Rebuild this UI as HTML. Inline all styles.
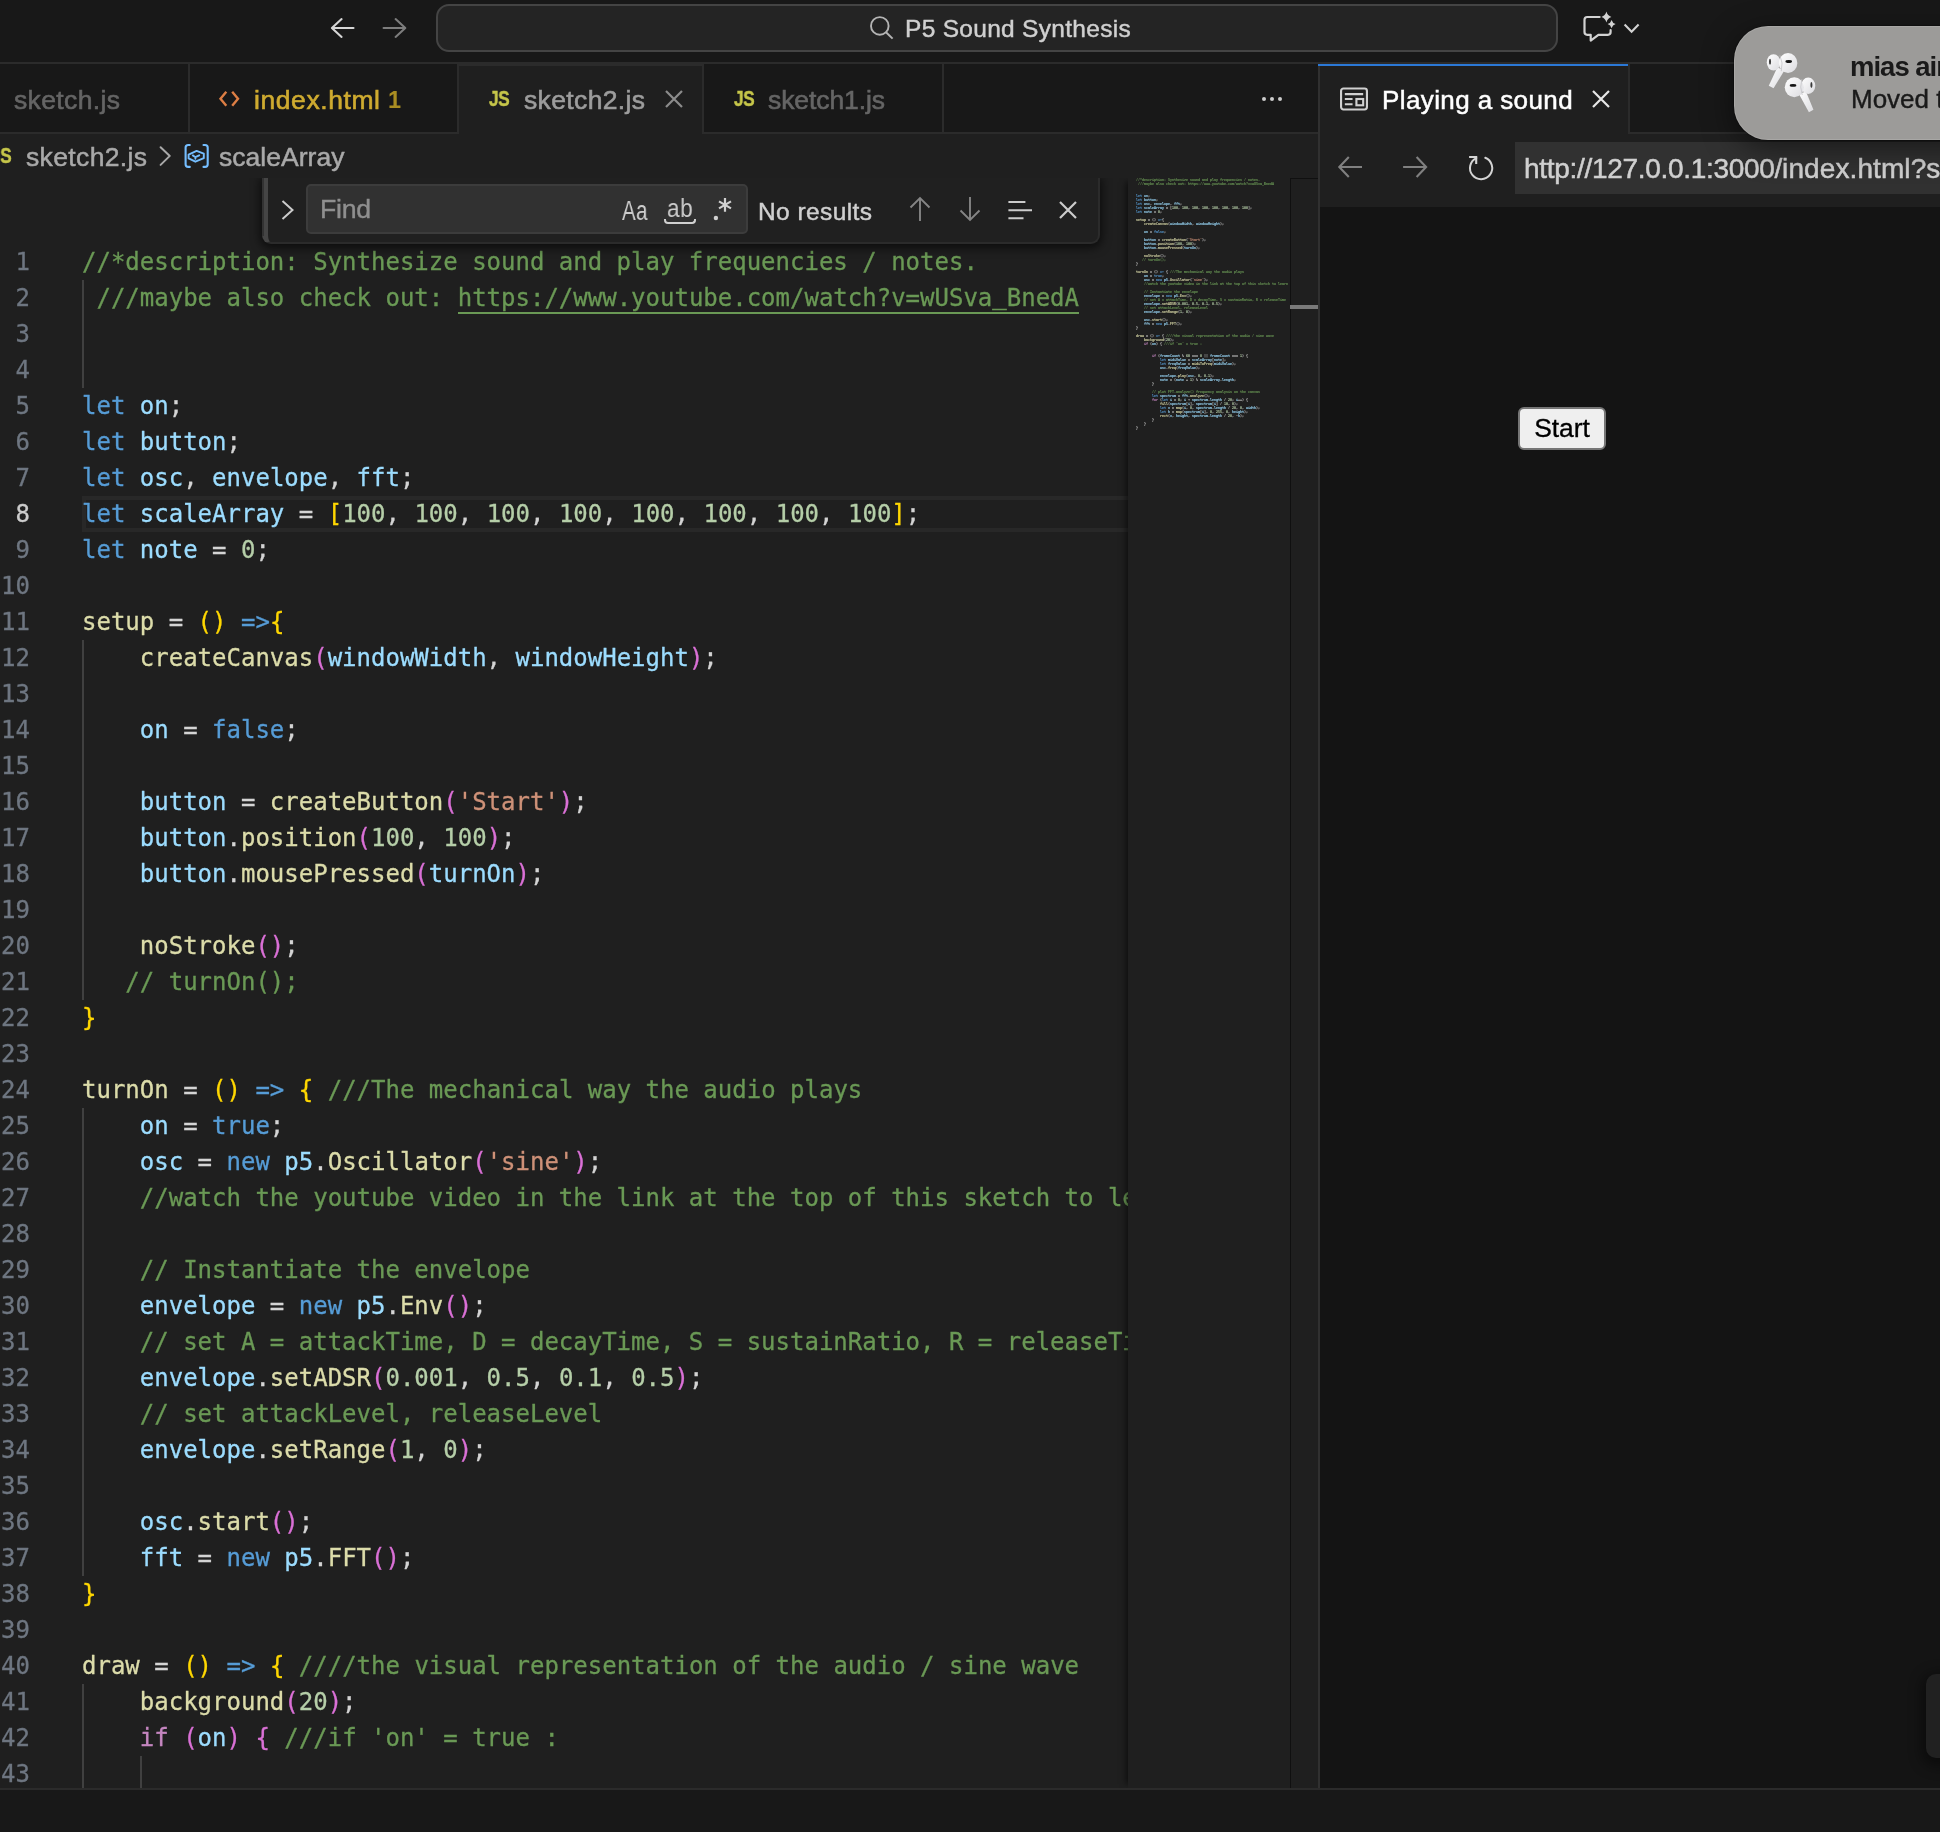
<!DOCTYPE html>
<html lang="en">
<head>
<meta charset="utf-8">
<title>P5 Sound Synthesis</title>
<style>
*{box-sizing:border-box;margin:0;padding:0}
html,body{width:1940px;height:1832px;overflow:hidden;background:#181818}
body{position:relative;font-family:"Liberation Sans",sans-serif;color:#ccc;-webkit-font-smoothing:antialiased}
.abs{position:absolute}
.tl,.bl,.ft,.nt,.js,#code,#cctext,#urlt,#start,#mmcode{will-change:transform}
/* ---------- title bar ---------- */
#title{left:0;top:0;width:1940px;height:64px;background:#181818;border-bottom:2px solid #2b2b2b}
#cc{left:436px;top:4px;width:1122px;height:48px;border:2px solid #444;border-radius:13px;background:#242424}
#cctext{left:905px;top:12px;font-size:24.5px;line-height:34px;color:#d0d0d0;white-space:nowrap;letter-spacing:.3px;-webkit-text-stroke:.45px}
/* ---------- tabs ---------- */
#tabs{left:0;top:64px;width:1318px;height:70px;background:#181818;border-bottom:2px solid #2b2b2b}
.tab{position:absolute;top:0;height:70px;border-right:2px solid #2b2b2b;border-bottom:2px solid #2b2b2b;background:#181818}
.tab.on{background:#1f1f1f;border-bottom:none;border-top:2px solid #2b2b2b}
.tl{position:absolute;top:19px;font-size:26.5px;line-height:34px;white-space:nowrap;letter-spacing:.36px;-webkit-text-stroke:.6px}
.js{position:absolute;font-size:21.5px;font-weight:bold;color:#c6c64a;line-height:30px;letter-spacing:-.5px;transform:scaleX(.8);transform-origin:0 0;white-space:nowrap;-webkit-text-stroke:.45px}
/* ---------- breadcrumbs ---------- */
#bc{left:0;top:134px;width:1318px;height:44px;background:#1f1f1f}
.bl{position:absolute;top:6px;font-size:26.5px;line-height:34px;color:#a9a9a9;white-space:nowrap;letter-spacing:.36px;-webkit-text-stroke:.5px}
/* ---------- editor ---------- */
#ed{left:0;top:178px;width:1318px;height:1610px;background:#1f1f1f;overflow:hidden}
#code{position:absolute;left:0;top:66px;width:1128px;font-family:"DejaVu Sans Mono","Liberation Mono",monospace;font-size:24px;line-height:36px;color:#d4d4d4;overflow:hidden;-webkit-text-stroke:.3px}
.row{position:relative;height:36px;width:1128px;overflow:hidden}
.ln{position:absolute;left:-14px;top:0;width:44px;text-align:right;color:#6e7681}
.ln.act{color:#ccc}
.tx{position:absolute;left:82px;top:0;white-space:pre}
.c{color:#6a9955}.k{color:#569cd6}.v{color:#9cdcfe}.f{color:#dcdcaa}.n{color:#b5cea8}.s{color:#ce9178}.x{color:#c586c0}
.b1{color:#ffd700}.b2{color:#da70d6}.b3{color:#179fff}
.u{color:#6a9955}
.ul{position:absolute;top:32px;height:2px;background:#6a9955}
.us{position:relative;top:-2.500px}
.guide{position:absolute;width:2px;background:#404040}
#curline{left:82px;top:318px;width:1050px;height:36px;border:4px solid #282828}
/* minimap */
#mm{left:1128px;top:0;width:162px;height:1610px;background:#1f1f1f;box-shadow:-6px 0 6px -4px rgba(0,0,0,.55)}
#mmcode{position:absolute;left:8px;top:0;transform-origin:0 0;transform:scale(.1384,.1111);font-family:"DejaVu Sans Mono","Liberation Mono",monospace;font-size:24px;line-height:36px;color:#d4d4d4;font-weight:bold}
#mmcode div{height:36px;white-space:pre}
#mmcode .b1,#mmcode .b2,#mmcode .b3{color:#d4d4d4}
#mmcode .us{position:static}
#sb{left:1290px;top:0;width:28px;height:1610px;background:#1f1f1f;border-left:1px solid #101010;border-top:1px solid #101010}
#sbs{left:1290px;top:127px;width:28px;height:4px;background:#7a7a7a}
/* find */
#find{left:262px;top:0;width:838px;height:66px;background:#202020;border:2px solid #2b2b2b;border-top:none;border-left:6px solid #454545;border-radius:0 0 9px 9px;box-shadow:0 2px 10px 2px rgba(0,0,0,.6)}
#finp{left:306px;top:6px;width:442px;height:50px;background:#313131;border:2px solid #3c3c3c;border-radius:5px}
.ft{position:absolute;font-size:26px;line-height:34px;white-space:nowrap}
/* ---------- right panel ---------- */
#rp{left:1318px;top:64px;width:622px;height:1724px;background:#141414;border-left:2px solid #303030}
#rtabs{left:1320px;top:64px;width:620px;height:70px;background:#181818;border-bottom:2px solid #2b2b2b}
#rtab{left:1320px;top:64px;width:310px;height:70px;background:#1f1f1f;border-right:2px solid #2b2b2b}
#rtabtop{left:1318px;top:64px;width:310px;height:2px;background:#2b78d6}
#nav{left:1320px;top:134px;width:620px;height:73px;background:#1f1f1f}
#url{left:1515px;top:142px;width:430px;height:52px;background:#313131}
#urlt{left:1523.500px;top:151px;font-size:28px;line-height:36px;color:#d0d0d0;white-space:nowrap;letter-spacing:.1px;-webkit-text-stroke:.5px}
#start{left:1518px;top:407px;width:88px;height:43px;background:#efefef;border:2px solid #767676;border-radius:6px;color:#000;font-size:26.4px;line-height:39px;text-align:center;-webkit-text-stroke:.35px}
#mini2{left:1926px;top:1674px;width:30px;height:84px;background:#212121;border-radius:10px;box-shadow:0 4px 14px 4px rgba(0,0,0,.45)}
/* ---------- bottom ---------- */
#bot{left:0;top:1788px;width:1940px;height:44px;background:#181818;border-top:2px solid #2b2b2b}
/* ---------- notification ---------- */
#noti{left:1734px;top:26px;width:260px;height:114px;background:#9c9b99;border-radius:34px;box-shadow:inset 0 0 0 1px rgba(255,255,255,.12),0 0 0 1px rgba(0,0,0,.25),0 8px 30px rgba(0,0,0,.5)}
.nt{position:absolute;left:1850px;font-size:26px;line-height:32px;color:#1a1a1a;white-space:nowrap;letter-spacing:0}
svg{position:absolute;overflow:visible}
</style>
</head>
<body>
<!-- title bar -->
<div id="title" class="abs"></div>
<svg class="abs" style="left:320px;top:8px" width="100" height="40" viewBox="320 8 100 40"><path d="M341.600 19.100 L331.900 28 L341.600 36.900 M332.200 28 H353.500" fill="none" stroke="#d6d6d6" stroke-width="2.100" stroke-linecap="round" stroke-linejoin="round"/><path d="M395.600 19.100 L405.300 28 L395.600 36.900 M405 28 H383.600" fill="none" stroke="#7d7d7d" stroke-width="2.100" stroke-linecap="round" stroke-linejoin="round"/></svg>
<div id="cc" class="abs"></div>
<svg class="abs" style="left:869px;top:15px" width="26" height="26" viewBox="0 0 26 26"><circle cx="10.800" cy="10.900" r="8.800" fill="none" stroke="#b4b4b4" stroke-width="1.900"/><path d="M17 17.200 L23.600 23.600" stroke="#b4b4b4" stroke-width="2" fill="none"/></svg>
<div id="cctext" class="abs">P5 Sound Synthesis</div>
<svg class="abs" style="left:1560px;top:0" width="120" height="60" viewBox="0 0 120 60"><path d="M39.600 17 H27.200 Q24.500 17 24.500 19.700 V32.100 Q24.500 34.800 27.200 34.800 H30.700 V40.600 L38.400 34.800 H47.900 Q50.600 34.800 50.600 32.100 V30.200" fill="none" stroke="#d2d2d2" stroke-width="2.200" stroke-linejoin="round" stroke-linecap="round"/><path d="M46.40 11.60 Q47.50 15.81 51.40 17.00 Q47.50 18.19 46.40 22.40 Q45.30 18.19 41.40 17.00 Q45.30 15.81 46.40 11.60 Z" fill="#d2d2d2"/><path d="M51.60 20.00 Q52.48 23.20 55.60 24.10 Q52.48 25.00 51.60 28.20 Q50.72 25.00 47.60 24.10 Q50.72 23.20 51.60 20.00 Z" fill="#d2d2d2"/><path d="M64.600 24.600 L71.600 31.800 L78.600 24.600" fill="none" stroke="#d2d2d2" stroke-width="2.100"/></svg>

<!-- tabs -->
<div id="tabs" class="abs">
  <div class="tab" style="left:0;width:190px"><span class="tl" style="left:14px;color:#656565">sketch.js</span></div>
  <div class="tab" style="left:190px;width:269px;z-index:1">
    <svg style="left:29px;top:27px" width="21" height="16" viewBox="0 0 21 16"><path d="M7.300 .8 L1.500 7.800 L7.300 14.800 M13.200 .8 L19 7.800 L13.200 14.800" fill="none" stroke="#dd7e44" stroke-width="2.400"/></svg>
    <span class="tl" style="left:64px;color:#cfab30;letter-spacing:.58px">index.html</span><span class="tl" style="left:198px;color:#a98d22;font-size:23.5px;font-weight:bold;-webkit-text-stroke:0">1</span></div>
  <div class="tab on" style="left:458px;width:246px">
    <span class="js" style="left:31px;top:18px">JS</span>
    <span class="tl" style="left:66px;top:17px;color:#9d9d9d">sketch2.js</span>
    <svg style="left:207px;top:24px" width="18" height="18" viewBox="0 0 18 18"><path d="M1 1 L17 17 M17 1 L1 17" fill="none" stroke="#8c8c8c" stroke-width="2.2"/></svg>
  </div>
  <div class="tab" style="left:704px;width:240px">
    <span class="js" style="left:30px;top:20px">JS</span>
    <span class="tl" style="left:64px;color:#656565;letter-spacing:-.08px">sketch1.js</span></div>
  <svg style="left:1261px;top:32px" width="22" height="6" viewBox="0 0 22 6"><circle cx="3" cy="3" r="2" fill="#ccc"/><circle cx="11" cy="3" r="2" fill="#ccc"/><circle cx="19" cy="3" r="2" fill="#ccc"/></svg>
</div>

<!-- breadcrumbs -->
<div id="bc" class="abs">
  <span class="js" style="left:-9px;top:7px">JS</span>
  <span class="bl" style="left:26px">sketch2.js</span>
  <svg style="left:150px;top:2px" width="100" height="40" viewBox="150 136 100 40"><path d="M160.600 147.200 L169.800 155.900 L160.600 164.900" fill="none" stroke="#a9a9a9" stroke-width="2" stroke-linecap="round" stroke-linejoin="round"/><path d="M189.800 145 H188.200 Q185.600 145 185.600 147.600 V164.300 Q185.600 166.900 188.200 166.900 H189.800 M203.500 145 H205.100 Q207.700 145 207.700 147.600 V164.300 Q207.700 166.900 205.100 166.900 H203.500" fill="none" stroke="#75beff" stroke-width="2.100" stroke-linecap="round"/><path d="M196.600 150.900 L203.800 153.700 V158.200 L195.400 161.700 L188.600 158.400 V154.600 Z" fill="none" stroke="#75beff" stroke-width="1.900" stroke-linejoin="round"/><path d="M192.800 155.400 L195.400 157.200 L199.200 155.300 M195.400 157.200 V158.700" fill="none" stroke="#75beff" stroke-width="1.900" stroke-linecap="round"/></svg>
  <span class="bl" style="left:219px;letter-spacing:.03px">scaleArray</span>
</div>

<!-- editor -->
<div id="ed" class="abs">
  <div id="curline" class="abs"></div>
  <div id="code">
<div class="row"><span class="ln">1</span><span class="tx"><span class="c">//*description: Synthesize sound and play frequencies / notes.</span></span></div>
<div class="row"><span class="ln">2</span><span class="tx"><span class="c"> ///maybe also check out: </span><span class="u">https://www.youtube.com/watch?v=wUSva<span class="us">_</span>BnedA</span></span><span class="ul" style="left:457.68px;width:621.32px"></span></div>
<div class="row"><span class="ln">3</span><span class="tx"></span></div>
<div class="row"><span class="ln">4</span><span class="tx"></span></div>
<div class="row"><span class="ln">5</span><span class="tx"><span class="k">let</span> <span class="v">on</span>;</span></div>
<div class="row"><span class="ln">6</span><span class="tx"><span class="k">let</span> <span class="v">button</span>;</span></div>
<div class="row"><span class="ln">7</span><span class="tx"><span class="k">let</span> <span class="v">osc</span>, <span class="v">envelope</span>, <span class="v">fft</span>;</span></div>
<div class="row"><span class="ln act">8</span><span class="tx"><span class="k">let</span> <span class="v">scaleArray</span> = <span class="b1">[</span><span class="n">100</span>, <span class="n">100</span>, <span class="n">100</span>, <span class="n">100</span>, <span class="n">100</span>, <span class="n">100</span>, <span class="n">100</span>, <span class="n">100</span><span class="b1">]</span>;</span></div>
<div class="row"><span class="ln">9</span><span class="tx"><span class="k">let</span> <span class="v">note</span> = <span class="n">0</span>;</span></div>
<div class="row"><span class="ln">10</span><span class="tx"></span></div>
<div class="row"><span class="ln">11</span><span class="tx"><span class="f">setup</span> = <span class="b1">()</span> <span class="k">=&gt;</span><span class="b1">{</span></span></div>
<div class="row"><span class="ln">12</span><span class="tx">    <span class="f">createCanvas</span><span class="b2">(</span><span class="v">windowWidth</span>, <span class="v">windowHeight</span><span class="b2">)</span>;</span></div>
<div class="row"><span class="ln">13</span><span class="tx"></span></div>
<div class="row"><span class="ln">14</span><span class="tx">    <span class="v">on</span> = <span class="k">false</span>;</span></div>
<div class="row"><span class="ln">15</span><span class="tx"></span></div>
<div class="row"><span class="ln">16</span><span class="tx">    <span class="v">button</span> = <span class="f">createButton</span><span class="b2">(</span><span class="s">'Start'</span><span class="b2">)</span>;</span></div>
<div class="row"><span class="ln">17</span><span class="tx">    <span class="v">button</span>.<span class="f">position</span><span class="b2">(</span><span class="n">100</span>, <span class="n">100</span><span class="b2">)</span>;</span></div>
<div class="row"><span class="ln">18</span><span class="tx">    <span class="v">button</span>.<span class="f">mousePressed</span><span class="b2">(</span><span class="v">turnOn</span><span class="b2">)</span>;</span></div>
<div class="row"><span class="ln">19</span><span class="tx"></span></div>
<div class="row"><span class="ln">20</span><span class="tx">    <span class="f">noStroke</span><span class="b2">()</span>;</span></div>
<div class="row"><span class="ln">21</span><span class="tx">   <span class="c">// turnOn();</span></span></div>
<div class="row"><span class="ln">22</span><span class="tx"><span class="b1">}</span></span></div>
<div class="row"><span class="ln">23</span><span class="tx"></span></div>
<div class="row"><span class="ln">24</span><span class="tx"><span class="f">turnOn</span> = <span class="b1">()</span> <span class="k">=&gt;</span> <span class="b1">{</span> <span class="c">///The mechanical way the audio plays</span></span></div>
<div class="row"><span class="ln">25</span><span class="tx">    <span class="v">on</span> = <span class="k">true</span>;</span></div>
<div class="row"><span class="ln">26</span><span class="tx">    <span class="v">osc</span> = <span class="k">new</span> <span class="v">p5</span>.<span class="f">Oscillator</span><span class="b2">(</span><span class="s">'sine'</span><span class="b2">)</span>;</span></div>
<div class="row"><span class="ln">27</span><span class="tx">    <span class="c">//watch the youtube video in the link at the top of this sketch to learn</span></span></div>
<div class="row"><span class="ln">28</span><span class="tx"></span></div>
<div class="row"><span class="ln">29</span><span class="tx">    <span class="c">// Instantiate the envelope</span></span></div>
<div class="row"><span class="ln">30</span><span class="tx">    <span class="v">envelope</span> = <span class="k">new</span> <span class="v">p5</span>.<span class="f">Env</span><span class="b2">()</span>;</span></div>
<div class="row"><span class="ln">31</span><span class="tx">    <span class="c">// set A = attackTime, D = decayTime, S = sustainRatio, R = releaseTime</span></span></div>
<div class="row"><span class="ln">32</span><span class="tx">    <span class="v">envelope</span>.<span class="f">setADSR</span><span class="b2">(</span><span class="n">0.001</span>, <span class="n">0.5</span>, <span class="n">0.1</span>, <span class="n">0.5</span><span class="b2">)</span>;</span></div>
<div class="row"><span class="ln">33</span><span class="tx">    <span class="c">// set attackLevel, releaseLevel</span></span></div>
<div class="row"><span class="ln">34</span><span class="tx">    <span class="v">envelope</span>.<span class="f">setRange</span><span class="b2">(</span><span class="n">1</span>, <span class="n">0</span><span class="b2">)</span>;</span></div>
<div class="row"><span class="ln">35</span><span class="tx"></span></div>
<div class="row"><span class="ln">36</span><span class="tx">    <span class="v">osc</span>.<span class="f">start</span><span class="b2">()</span>;</span></div>
<div class="row"><span class="ln">37</span><span class="tx">    <span class="v">fft</span> = <span class="k">new</span> <span class="v">p5</span>.<span class="f">FFT</span><span class="b2">()</span>;</span></div>
<div class="row"><span class="ln">38</span><span class="tx"><span class="b1">}</span></span></div>
<div class="row"><span class="ln">39</span><span class="tx"></span></div>
<div class="row"><span class="ln">40</span><span class="tx"><span class="f">draw</span> = <span class="b1">()</span> <span class="k">=&gt;</span> <span class="b1">{</span> <span class="c">////the visual representation of the audio / sine wave</span></span></div>
<div class="row"><span class="ln">41</span><span class="tx">    <span class="f">background</span><span class="b2">(</span><span class="n">20</span><span class="b2">)</span>;</span></div>
<div class="row"><span class="ln">42</span><span class="tx">    <span class="x">if</span> <span class="b2">(</span><span class="v">on</span><span class="b2">)</span> <span class="b2">{</span> <span class="c">///if 'on' = true :</span></span></div>
<div class="row"><span class="ln">43</span><span class="tx"></span></div>
  </div>
  <div class="guide" style="left:82px;top:102px;height:108px"></div>
  <div class="guide" style="left:82px;top:462px;height:360px"></div>
  <div class="guide" style="left:82px;top:930px;height:468px"></div>
  <div class="guide" style="left:82px;top:1506px;height:108px"></div>
  <div class="guide" style="left:140px;top:1578px;height:36px"></div>
  <div id="mm" class="abs"><div id="mmcode">
<div><span class="c">//*description: Synthesize sound and play frequencies / notes.</span></div>
<div><span class="c"> ///maybe also check out: </span><span class="u">https://www.youtube.com/watch?v=wUSva_BnedA</span></div>
<div></div>
<div></div>
<div><span class="k">let</span> <span class="v">on</span>;</div>
<div><span class="k">let</span> <span class="v">button</span>;</div>
<div><span class="k">let</span> <span class="v">osc</span>, <span class="v">envelope</span>, <span class="v">fft</span>;</div>
<div><span class="k">let</span> <span class="v">scaleArray</span> = <span class="b1">[</span><span class="n">100</span>, <span class="n">100</span>, <span class="n">100</span>, <span class="n">100</span>, <span class="n">100</span>, <span class="n">100</span>, <span class="n">100</span>, <span class="n">100</span><span class="b1">]</span>;</div>
<div><span class="k">let</span> <span class="v">note</span> = <span class="n">0</span>;</div>
<div></div>
<div><span class="f">setup</span> = <span class="b1">()</span> <span class="k">=&gt;</span><span class="b1">{</span></div>
<div>    <span class="f">createCanvas</span><span class="b2">(</span><span class="v">windowWidth</span>, <span class="v">windowHeight</span><span class="b2">)</span>;</div>
<div></div>
<div>    <span class="v">on</span> = <span class="k">false</span>;</div>
<div></div>
<div>    <span class="v">button</span> = <span class="f">createButton</span><span class="b2">(</span><span class="s">'Start'</span><span class="b2">)</span>;</div>
<div>    <span class="v">button</span>.<span class="f">position</span><span class="b2">(</span><span class="n">100</span>, <span class="n">100</span><span class="b2">)</span>;</div>
<div>    <span class="v">button</span>.<span class="f">mousePressed</span><span class="b2">(</span><span class="v">turnOn</span><span class="b2">)</span>;</div>
<div></div>
<div>    <span class="f">noStroke</span><span class="b2">()</span>;</div>
<div>   <span class="c">// turnOn();</span></div>
<div><span class="b1">}</span></div>
<div></div>
<div><span class="f">turnOn</span> = <span class="b1">()</span> <span class="k">=&gt;</span> <span class="b1">{</span> <span class="c">///The mechanical way the audio plays</span></div>
<div>    <span class="v">on</span> = <span class="k">true</span>;</div>
<div>    <span class="v">osc</span> = <span class="k">new</span> <span class="v">p5</span>.<span class="f">Oscillator</span><span class="b2">(</span><span class="s">'sine'</span><span class="b2">)</span>;</div>
<div>    <span class="c">//watch the youtube video in the link at the top of this sketch to learn</span></div>
<div></div>
<div>    <span class="c">// Instantiate the envelope</span></div>
<div>    <span class="v">envelope</span> = <span class="k">new</span> <span class="v">p5</span>.<span class="f">Env</span><span class="b2">()</span>;</div>
<div>    <span class="c">// set A = attackTime, D = decayTime, S = sustainRatio, R = releaseTime</span></div>
<div>    <span class="v">envelope</span>.<span class="f">setADSR</span><span class="b2">(</span><span class="n">0.001</span>, <span class="n">0.5</span>, <span class="n">0.1</span>, <span class="n">0.5</span><span class="b2">)</span>;</div>
<div>    <span class="c">// set attackLevel, releaseLevel</span></div>
<div>    <span class="v">envelope</span>.<span class="f">setRange</span><span class="b2">(</span><span class="n">1</span>, <span class="n">0</span><span class="b2">)</span>;</div>
<div></div>
<div>    <span class="v">osc</span>.<span class="f">start</span><span class="b2">()</span>;</div>
<div>    <span class="v">fft</span> = <span class="k">new</span> <span class="v">p5</span>.<span class="f">FFT</span><span class="b2">()</span>;</div>
<div><span class="b1">}</span></div>
<div></div>
<div><span class="f">draw</span> = <span class="b1">()</span> <span class="k">=&gt;</span> <span class="b1">{</span> <span class="c">////the visual representation of the audio / sine wave</span></div>
<div>    <span class="f">background</span><span class="b2">(</span><span class="n">20</span><span class="b2">)</span>;</div>
<div>    <span class="x">if</span> <span class="b2">(</span><span class="v">on</span><span class="b2">)</span> <span class="b2">{</span> <span class="c">///if 'on' = true :</span></div>
<div></div>
<div></div>
<div>        <span class="x">if</span> <span class="b3">(</span><span class="v">frameCount</span> % <span class="n">60</span> === <span class="n">0</span> || <span class="v">frameCount</span> === <span class="n">1</span><span class="b3">)</span> <span class="b3">{</span></div>
<div>            <span class="k">let</span> <span class="v">midiValue</span> = <span class="v">scaleArray</span><span class="b1">[</span><span class="v">note</span><span class="b1">]</span>;</div>
<div>            <span class="k">let</span> <span class="v">freqValue</span> = <span class="f">midiToFreq</span><span class="b1">(</span><span class="v">midiValue</span><span class="b1">)</span>;</div>
<div>            <span class="v">osc</span>.<span class="f">freq</span><span class="b1">(</span><span class="v">freqValue</span><span class="b1">)</span>;</div>
<div></div>
<div>            <span class="v">envelope</span>.<span class="f">play</span><span class="b1">(</span><span class="v">osc</span>, <span class="n">0</span>, <span class="n">0.1</span><span class="b1">)</span>;</div>
<div>            <span class="v">note</span> = <span class="b1">(</span><span class="v">note</span> + <span class="n">1</span><span class="b1">)</span> % <span class="v">scaleArray</span>.<span class="v">length</span>;</div>
<div>        <span class="b3">}</span></div>
<div></div>
<div>        <span class="c">// plot FFT.analyze() frequency analysis on the canvas</span></div>
<div>        <span class="k">let</span> <span class="v">spectrum</span> = <span class="v">fft</span>.<span class="f">analyze</span><span class="b3">()</span>;</div>
<div>        <span class="x">for</span> <span class="b3">(</span><span class="k">let</span> <span class="v">i</span> = <span class="n">0</span>; <span class="v">i</span> &lt; <span class="v">spectrum</span>.<span class="v">length</span> / <span class="n">20</span>; <span class="v">i</span>++<span class="b3">)</span> <span class="b3">{</span></div>
<div>            <span class="f">fill</span><span class="b1">(</span><span class="v">spectrum</span><span class="b2">[</span><span class="v">i</span><span class="b2">]</span>, <span class="v">spectrum</span><span class="b2">[</span><span class="v">i</span><span class="b2">]</span> / <span class="n">10</span>, <span class="n">0</span><span class="b1">)</span>;</div>
<div>            <span class="k">let</span> <span class="v">x</span> = <span class="f">map</span><span class="b1">(</span><span class="v">i</span>, <span class="n">0</span>, <span class="v">spectrum</span>.<span class="v">length</span> / <span class="n">20</span>, <span class="n">0</span>, <span class="v">width</span><span class="b1">)</span>;</div>
<div>            <span class="k">let</span> <span class="v">h</span> = <span class="f">map</span><span class="b1">(</span><span class="v">spectrum</span><span class="b2">[</span><span class="v">i</span><span class="b2">]</span>, <span class="n">0</span>, <span class="n">255</span>, <span class="n">0</span>, <span class="v">height</span><span class="b1">)</span>;</div>
<div>            <span class="f">rect</span><span class="b1">(</span><span class="v">x</span>, <span class="v">height</span>, <span class="v">spectrum</span>.<span class="v">length</span> / <span class="n">20</span>, -<span class="v">h</span><span class="b1">)</span>;</div>
<div>        <span class="b3">}</span></div>
<div>    <span class="b2">}</span></div>
<div><span class="b1">}</span></div>
  </div></div>
  <div id="sb" class="abs"></div>
  <div id="sbs" class="abs"></div>
  <div id="find" class="abs"></div><div class="abs" style="left:262px;top:0;width:2px;height:58px;background:#323232"></div>
  <svg class="abs" style="left:281.300px;top:22px" width="13" height="20" viewBox="0 0 13 20"><path d="M1.500 1 L11.500 10 L1.500 19" fill="none" stroke="#ccc" stroke-width="2"/></svg>
  <div id="finp" class="abs"></div>
  <span class="ft" style="left:319.500px;top:14px;color:#8f8f8f;letter-spacing:-.3px;font-size:26.7px;-webkit-text-stroke:.4px">Find</span>
  <span class="ft" style="left:622px;top:15.600px;color:#ccc;font-size:27px;letter-spacing:.5px;transform:scaleX(.76);transform-origin:0 0">Aa</span>
  <span class="ft" style="left:667px;top:13px;color:#ccc;font-size:26.5px;letter-spacing:.8px;transform:scaleX(.85);transform-origin:0 0">ab</span>
  <div class="abs" style="left:664px;top:41px;width:32px;height:4.500px;border:2px solid #d0d0d0;border-top:none;border-radius:0 0 4px 4px"></div>
  <svg class="abs" style="left:710px;top:16px" width="26" height="30" viewBox="710 16 26 30"><circle cx="715.900" cy="40" r="2.200" fill="#d0d0d0"/><path d="M725 20 V33.800 M719 23.400 L731 30.400 M731 23.400 L719 30.400" fill="none" stroke="#d0d0d0" stroke-width="2.200"/></svg>
  <span class="ft" style="left:758px;top:17px;color:#d0d0d0;font-size:24.5px;letter-spacing:.42px;-webkit-text-stroke:.45px">No results</span>
  <svg class="abs" style="left:908px;top:18px" width="24" height="26" viewBox="0 0 24 26"><path d="M12 25 V2 M2.500 11.500 L12 2 L21.500 11.500" fill="none" stroke="#858585" stroke-width="1.900"/></svg>
  <svg class="abs" style="left:958px;top:18px" width="24" height="26" viewBox="0 0 24 26"><path d="M12 1 V24 M2.500 14.500 L12 24 L21.500 14.500" fill="none" stroke="#858585" stroke-width="1.900"/></svg>
  <svg class="abs" style="left:1007px;top:22px" width="26" height="20" viewBox="0 0 26 20"><path d="M1.400 2.100 H18.400 M1.400 10.200 H25 M1.400 18.200 H16.500" fill="none" stroke="#ccc" stroke-width="2"/></svg>
  <svg class="abs" style="left:1059px;top:23px" width="18" height="18" viewBox="0 0 18 18"><path d="M1 1 L17 17 M17 1 L1 17" fill="none" stroke="#ccc" stroke-width="2.2"/></svg>
</div>

<!-- right panel -->
<div id="rp" class="abs"></div>
<div id="rtabs" class="abs"></div>
<div id="rtab" class="abs"></div><div id="rtabtop" class="abs"></div>
<svg class="abs" style="left:1340px;top:87px" width="28" height="24" viewBox="0 0 29 24"><rect x="1.100" y="1.100" width="26.800" height="21.800" rx="2.500" fill="none" stroke="#d0d0d0" stroke-width="2.200"/><path d="M5 7 H24 M5 12 H13 M5 17.500 H13" stroke="#d0d0d0" stroke-width="2.200" fill="none"/><rect x="17" y="12" width="7" height="6.500" fill="none" stroke="#d0d0d0" stroke-width="2.200"/></svg>
<span class="ft abs" style="left:1382px;top:83px;color:#fff;letter-spacing:.4px;-webkit-text-stroke:.5px">Playing a sound</span>
<svg class="abs" style="left:1592px;top:90px" width="18" height="18" viewBox="0 0 18 18"><path d="M1 1 L17 17 M17 1 L1 17" fill="none" stroke="#e8e8e8" stroke-width="2.200"/></svg>
<div id="nav" class="abs"></div>
<svg class="abs" style="left:1328px;top:147px" width="120" height="40" viewBox="1328 147 120 40"><path d="M1348.800 157 L1339.300 167 L1348.800 177 M1339.500 167 H1362" fill="none" stroke="#808080" stroke-width="2.100" stroke-linejoin="miter"/><path d="M1416.600 157 L1426.100 167 L1416.600 177 M1426 167 H1403.100" fill="none" stroke="#808080" stroke-width="2.100" stroke-linejoin="miter"/></svg>
<svg class="abs" style="left:1460px;top:148px" width="44" height="40" viewBox="0 0 44 40"><path d="M25.260 9.780 A11.100 11.100 0 1 1 16.300 10.050" fill="none" stroke="#d4d4d4" stroke-width="2" stroke-linecap="round"/><path d="M9.100 9.070 H16.200 V15.900" fill="none" stroke="#d4d4d4" stroke-width="2.100"/></svg>
<div id="url" class="abs"></div>
<div id="urlt" class="abs"><span style="letter-spacing:-.3px">http://127.0.0.1:3000/</span>index.html?sketch=sketch2.js</div>
<div id="start" class="abs">Start</div>
<div id="mini2" class="abs"></div>

<!-- bottom -->
<div id="bot" class="abs"></div>

<!-- notification -->
<div id="noti" class="abs"></div>
<span class="nt" style="top:51px;font-weight:bold;font-size:27.5px;letter-spacing:-1px;left:1850px">mias airpods</span>
<span class="nt" style="top:83px;left:1851px;-webkit-text-stroke:.4px">Moved to iPhone</span>
<svg class="abs" style="left:1720px;top:10px" width="220" height="140" viewBox="0 0 1940 1235">
  <defs><linearGradient id="pg" x1="0" y1="0" x2="1" y2="1"><stop offset="0" stop-color="#ffffff"/><stop offset="1" stop-color="#dcdce0"/></linearGradient></defs>
  <g fill="url(#pg)">
    <path d="M506 505 L566 535 L472 690 L430 668 Z"/>
    <ellipse cx="472" cy="462" rx="60" ry="72"/>
    <ellipse cx="600" cy="468" rx="82" ry="88"/>
    <path d="M696 742 L758 718 L824 880 L784 902 Z"/>
    <ellipse cx="778" cy="668" rx="62" ry="72"/>
    <ellipse cx="655" cy="682" rx="84" ry="88"/>
  </g>
  <path d="M528 400 Q560 465 540 540" fill="none" stroke="#c4c4c8" stroke-width="7"/>
  <path d="M722 610 Q700 680 725 750" fill="none" stroke="#c4c4c8" stroke-width="7"/>
  <ellipse cx="606" cy="455" rx="29" ry="13" fill="#141414"/>
  <ellipse cx="644" cy="665" rx="29" ry="13" fill="#141414"/>
  <ellipse cx="441" cy="456" rx="9" ry="27" fill="#3a3a3a"/>
  <ellipse cx="806" cy="662" rx="9" ry="27" fill="#3a3a3a"/>
</svg>
</body>
</html>
